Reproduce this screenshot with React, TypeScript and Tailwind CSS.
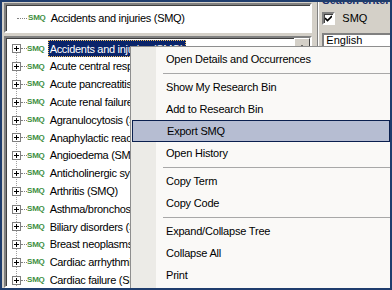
import React from 'react';

const TREE_ITEMS = [
  'Accidents and injuries (SMQ)',
  'Acute central respiratory depression (SMQ)',
  'Acute pancreatitis (SMQ)',
  'Acute renal failure (SMQ)',
  'Agranulocytosis (SMQ)',
  'Anaphylactic reaction (SMQ)',
  'Angioedema (SMQ)',
  'Anticholinergic syndrome (SMQ)',
  'Arthritis (SMQ)',
  'Asthma/bronchospasm (SMQ)',
  'Biliary disorders (SMQ)',
  'Breast neoplasms, malignant and unspecified (SMQ)',
  'Cardiac arrhythmias (SMQ)',
  'Cardiac failure (SMQ)',
];

type MenuEntry = { label: string; active?: boolean } | 'sep';

const MENU: MenuEntry[] = [
  { label: 'Open Details and Occurrences' },
  'sep',
  { label: 'Show My Research Bin' },
  { label: 'Add to Research Bin' },
  { label: 'Export SMQ', active: true },
  { label: 'Open History' },
  'sep',
  { label: 'Copy Term' },
  { label: 'Copy Code' },
  'sep',
  { label: 'Expand/Collapse Tree' },
  { label: 'Collapse All' },
  { label: 'Print' },
];

const font = { fontFamily: '"Liberation Sans", Arial, sans-serif' };

const SmqTag = () => (
  <span className="text-[8px] font-bold text-[#3f8f3f] leading-none tracking-[-0.2px]">SMQ</span>
);

const PlusBox = () => (
  <span className="relative z-10 w-[9px] h-[9px] border border-[#7f7f7f] bg-white flex items-center justify-center shrink-0">
    <span className="absolute w-[5px] h-px bg-black" />
    <span className="absolute w-px h-[5px] bg-black" />
  </span>
);

export default function App() {
  return (
    <div
      className="w-[392px] h-[290px] relative overflow-hidden border-2 border-[#1f3d6d] bg-[#d4d0c8] flex"
      style={font}
    >
      {/* left column */}
      <div className="w-[336px] flex flex-col pl-[2px] pt-px gap-[3px]">
        {/* selected term field */}
        <div className="h-[30px] bg-white border-2 border-t-[#808080] border-l-[#808080] border-b-white border-r-white shadow-[inset_1px_1px_0_#404040] flex items-center pl-[11px]">
          <span className="w-[10px] border-t border-dotted border-[#808080] mr-px" />
          <SmqTag />
          <span className="ml-[5px] text-[11px] text-black tracking-[-0.3px]">Accidents and injuries (SMQ)</span>
        </div>

        {/* tree */}
        <div className="flex-1 bg-white border-2 border-t-[#808080] border-l-[#808080] border-b-white border-r-white shadow-[inset_1px_1px_0_#404040] flex overflow-hidden">
          <div className="relative flex-1 pt-[2px] pl-[6px]">
            <div className="absolute left-[10px] top-[10px] bottom-0 border-l border-dotted border-[#a0a0a0]" />
            {TREE_ITEMS.map((t, i) => (
              <div key={t} className="h-[17.8px] flex items-center whitespace-nowrap">
                <PlusBox />
                <span className="w-[6px] border-t border-dotted border-[#808080]" />
                <SmqTag />
                <span
                  className={`ml-[3px] px-[2px] h-[17px] flex items-center text-[11px] tracking-[-0.3px] ${
                    i === 0
                      ? 'bg-[#0a246a] text-white outline outline-1 outline-dotted outline-[#f0c060] -outline-offset-1'
                      : 'text-black'
                  }`}
                >
                  {t}
                </span>
              </div>
            ))}
          </div>
          {/* scrollbar */}
          <div className="w-[16px] bg-[#ece9e2] flex flex-col">
            <div className="h-[16px] bg-[#d4d0c8] border border-t-white border-l-white border-r-[#404040] border-b-[#404040] flex items-center justify-center">
              <span className="w-0 h-0 border-l-[3px] border-r-[3px] border-b-[3px] border-l-transparent border-r-transparent border-b-black" />
            </div>
          </div>
        </div>
      </div>

      {/* right search panel */}
      <div className="flex-1 pl-[5px] flex">
        <div className="flex-1 border-l border-[#808080] shadow-[inset_1px_0_0_white] pl-[4px] flex flex-col">
          <div className="-mt-[8px] h-[11px] text-[11px] leading-[12px] font-bold text-[#1b2f6b] whitespace-nowrap">Search criteria</div>
          <div className="mt-[5px] flex items-center gap-[7px] whitespace-nowrap">
            <span className="w-[13px] h-[13px] bg-white border-2 border-t-[#808080] border-l-[#808080] border-b-white border-r-white shadow-[inset_1px_1px_0_#404040] flex items-center justify-center shrink-0">
              <svg width="7" height="7" viewBox="0 0 7 7">
                <path d="M0 3 L2.5 5.5 L7 1" stroke="black" strokeWidth="1.6" fill="none" />
              </svg>
            </span>
            <span className="text-[11px] text-black">SMQ</span>
          </div>
          <div className="mt-[6px] h-[15px] bg-white border-2 border-t-[#808080] border-l-[#808080] border-b-white border-r-white pl-[2px] text-[11px] leading-[11px] text-black whitespace-nowrap">
            English
          </div>
        </div>
      </div>

      {/* context menu */}
      <div className="absolute left-[128px] top-[44px] w-[262px] h-[260px] border border-[#8e8e8e] bg-[#faf9f7] pt-px">
        <div className="absolute left-0 top-0 bottom-0 w-[25px] bg-[#ecebe7]" />
        <div className="relative">
          {MENU.map((m, i) =>
            m === 'sep' ? (
              <div key={i} className="h-[6.2px] flex items-center pl-[32px]">
                <div className="flex-1 h-px bg-[#a8a8a8]" />
              </div>
            ) : (
              <div
                key={i}
                className={`h-[22px] mx-px flex items-center pl-[34px] text-[11px] tracking-[-0.2px] text-black ${
                  m.active ? 'bg-[#b6bdd2] border border-[#0a1f4f] pl-[33px]' : ''
                }`}
              >
                {m.label}
              </div>
            )
          )}
        </div>
      </div>
    </div>
  );
}
